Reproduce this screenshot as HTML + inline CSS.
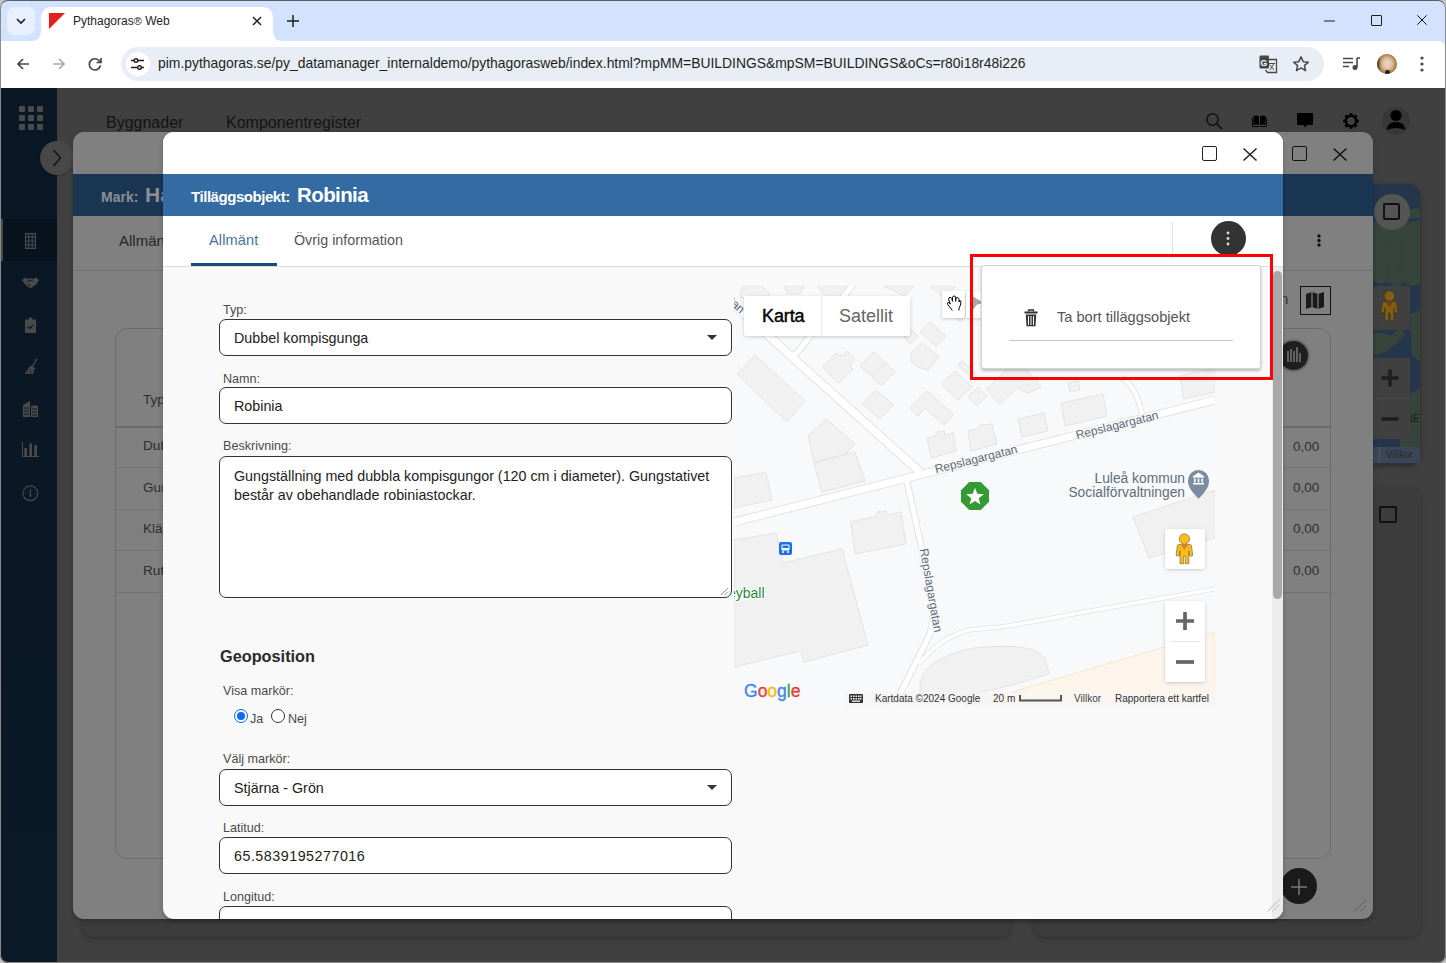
<!DOCTYPE html>
<html><head><meta charset="utf-8">
<style>
*{box-sizing:border-box;margin:0;padding:0}
html,body{width:1446px;height:963px;overflow:hidden;background:#404040;font-family:"Liberation Sans",sans-serif}
.a{position:absolute}
.t{position:absolute;white-space:nowrap;line-height:1}
svg{position:absolute;overflow:visible}
.lbl{font-size:12.6px;color:#4a4a4a}
.val{font-size:14.3px;color:#222}
.fld{position:absolute;left:56px;width:513px;border:1.3px solid #333;border-radius:7px;background:#fff}
</style></head><body>
<!-- ============ BROWSER CHROME ============ -->
<div class="a" style="left:0;top:0;width:1446px;height:88px;background:#d3e3fd"></div>
<div class="a" style="left:0;top:41px;width:1446px;height:47px;background:#fff"></div>
<!-- window frame -->
<div class="a" style="left:0;top:0;width:1446px;height:963px;border-radius:8px;border:1px solid #8a8a8a;border-top:1.6px solid #5a5f66;box-shadow:0 0 0 12px #c4c4c4;z-index:100;pointer-events:none"></div>
<div class="a" style="left:1436px;top:41px;width:10px;height:10px;background:#d3e3fd"></div><div class="a" style="left:1436px;top:41px;width:10px;height:10px;background:#fff;border-radius:0 8px 0 0"></div>
<!-- tab dropdown -->
<div class="a" style="left:7px;top:7px;width:28px;height:28px;border-radius:8px;background:#e9f0fd"></div>
<svg style="left:15px;top:15px" width="12" height="12" viewBox="0 0 12 12"><path d="M2 4 L6 8 L10 4" fill="none" stroke="#1f1f1f" stroke-width="1.6"/></svg>
<!-- active tab -->
<div class="a" style="left:41px;top:7px;width:232px;height:34px;background:#fff;border-radius:10px 10px 0 0"></div>
<svg style="left:31px;top:31px" width="10" height="10"><path d="M0 10 Q10 10 10 0 L10 10 Z" fill="#fff"/></svg>
<svg style="left:273px;top:31px" width="10" height="10"><path d="M10 10 Q0 10 0 0 L0 10 Z" fill="#fff"/></svg>
<svg style="left:49px;top:13px" width="16" height="16"><path d="M0 0 L16 0 L0 16 Z" fill="#e3201b"/></svg>
<div class="t" style="left:73px;top:15px;font-size:12px;color:#1f1f1f">Pythagoras<span style="font-size:11px">®</span> Web</div>
<svg style="left:252px;top:16px" width="10" height="10"><path d="M1 1 L9 9 M9 1 L1 9" stroke="#1f1f1f" stroke-width="1.5"/></svg>
<svg style="left:287px;top:15px" width="12" height="12"><path d="M6 0 V12 M0 6 H12" stroke="#1f1f1f" stroke-width="1.5"/></svg>
<!-- window controls -->
<svg style="left:1324px;top:20px" width="12" height="2"><path d="M0 1 H11" stroke="#1f1f1f" stroke-width="1"/></svg>
<div class="a" style="left:1371px;top:15px;width:11px;height:11px;border:1px solid #1f1f1f;border-radius:1px"></div>
<svg style="left:1417px;top:15px" width="10" height="10"><path d="M0.3 0.3 L9.7 9.7 M9.7 0.3 L0.3 9.7" stroke="#111" stroke-width="1"/></svg>
<!-- nav buttons -->
<svg style="left:16px;top:57px" width="14" height="14"><path d="M13 7 H2 M7 2 L2 7 L7 12" fill="none" stroke="#474747" stroke-width="1.7"/></svg>
<svg style="left:52px;top:57px" width="14" height="14"><path d="M1 7 H12 M7 2 L12 7 L7 12" fill="none" stroke="#a8a8a8" stroke-width="1.7"/></svg>
<svg style="left:88px;top:57px" width="14" height="14"><path d="M12.2 5.5 A5.6 5.6 0 1 0 12.4 8.5" fill="none" stroke="#474747" stroke-width="1.7"/><path d="M8.5 5.5 H13 V1" fill="none" stroke="#474747" stroke-width="1.7"/></svg>
<!-- omnibox -->
<div class="a" style="left:121px;top:47px;width:1203px;height:34px;border-radius:17px;background:#e9eef6"></div>
<div class="a" style="left:126px;top:52px;width:24px;height:24px;border-radius:12px;background:#fff"></div>
<svg style="left:131px;top:58px" width="14" height="12"><path d="M0 2.5 H3 M7 2.5 H13 M0 9.5 H6 M10 9.5 H13" stroke="#1f1f1f" stroke-width="1.6"/><circle cx="5" cy="2.5" r="1.8" fill="none" stroke="#1f1f1f" stroke-width="1.4"/><circle cx="8.5" cy="9.5" r="1.8" fill="none" stroke="#1f1f1f" stroke-width="1.4"/></svg>
<div class="t" style="left:158px;top:57px;font-size:13.9px;color:#1f1f1f">pim.pythagoras.se/py_datamanager_internaldemo/pythagorasweb/index.html?mpMM=BUILDINGS&amp;mpSM=BUILDINGS&amp;oCs=r80i18r48i226</div>
<!-- translate icon -->
<svg style="left:1259px;top:55px" width="19" height="19" viewBox="0 0 19 19"><path d="M6.5 4.5 H17.5 V17.5 H8.5 L6.5 15" fill="#eaeef6" stroke="#474747" stroke-width="1.3"/><rect x="0.5" y="0.5" width="9.5" height="13" rx="1" fill="#474747"/><text x="1.6" y="10.5" font-size="8.5" font-family="Liberation Sans" font-weight="bold" fill="#fff">G</text><path d="M10.5 9.5 L15 15 M15 8.5 L11 15 M10 8.5 H16" stroke="#474747" stroke-width="1"/></svg>
<!-- star -->
<svg style="left:1292px;top:55px" width="18" height="18" viewBox="0 0 24 24"><path d="M12 2.5 L14.9 8.9 L21.8 9.5 L16.5 14.1 L18.1 20.9 L12 17.3 L5.9 20.9 L7.5 14.1 L2.2 9.5 L9.1 8.9 Z" fill="none" stroke="#474747" stroke-width="2" stroke-linejoin="round"/></svg>
<!-- media icon -->
<svg style="left:1343px;top:57px" width="17" height="14"><path d="M0 1.5 H10 M0 5.5 H10 M0 9.5 H6" stroke="#474747" stroke-width="1.7"/><path d="M14 1 V10" stroke="#474747" stroke-width="1.6"/><path d="M14 1 H17" stroke="#474747" stroke-width="1.6"/><circle cx="12" cy="10.5" r="2.5" fill="#474747"/></svg>
<!-- avatar -->
<div class="a" style="left:1377px;top:54px;width:20px;height:20px;border-radius:10px;overflow:hidden;background:radial-gradient(ellipse 40% 45% at 52% 48%,#f0d8c8 0,#e0c0a8 55%,rgba(200,160,110,0) 100%),radial-gradient(circle at 50% 50%,#c8a878 0,#b08850 60%,#6a5030 85%,#302010 100%)">
<div class="a" style="left:7.5px;top:16px;width:5px;height:4px;border-radius:2px 2px 0 0;background:#2a2420"></div><div class="a" style="left:0;top:0;width:4px;height:20px;background:linear-gradient(90deg,rgba(20,15,10,.7),rgba(20,15,10,0))"></div>
</div>
<!-- menu dots -->
<svg style="left:1420px;top:56px" width="4" height="16"><circle cx="2" cy="2" r="1.6" fill="#474747"/><circle cx="2" cy="8" r="1.6" fill="#474747"/><circle cx="2" cy="14" r="1.6" fill="#474747"/></svg>

<!-- ============ PAGE ============ -->
<div class="a" style="left:1px;top:88px;width:1444px;height:874px;background:#404040"></div>
<!-- sidebar -->
<div class="a" style="left:1px;top:88px;width:56px;height:874px;background:linear-gradient(180deg,#0a1724 0%,#0b1a28 100%)"></div>
<div class="a" style="left:1px;top:219px;width:56px;height:42px;background:#08131d"></div>
<div class="a" style="left:1px;top:219px;width:2px;height:42px;background:#4a4a4a"></div>
<!-- grid icon -->
<svg style="left:19px;top:106px" width="24" height="24"><g fill="#4a4a4a"><rect x="0" y="0" width="6" height="6" rx="1"/><rect x="9" y="0" width="6" height="6" rx="1"/><rect x="18" y="0" width="6" height="6" rx="1"/><rect x="0" y="9" width="6" height="6" rx="1"/><rect x="9" y="9" width="6" height="6" rx="1"/><rect x="18" y="9" width="6" height="6" rx="1"/><rect x="0" y="18" width="6" height="6" rx="1"/><rect x="9" y="18" width="6" height="6" rx="1"/><rect x="18" y="18" width="6" height="6" rx="1"/></g></svg>
<!-- sidebar icons -->
<svg style="left:25px;top:233px" width="11" height="16"><rect x="0.6" y="0.6" width="9.8" height="14.8" fill="none" stroke="#4a4a4a" stroke-width="1.2"/><path d="M3.8 0 V16 M7.2 0 V16 M0 4 H11 M0 8 H11 M0 12 H11" stroke="#4a4a4a" stroke-width="1.1"/></svg>
<svg style="left:22px;top:277px" width="17" height="11"><path d="M0 3 L3 0.5 L6 2 L8.5 1 L11 2 L14 0.5 L17 3 L14.5 7 L10 10.5 L8 11 L5 9 L2.5 6.5 Z" fill="#4a4a4a"/><path d="M5 5 L8 3 L11 4.5 M6 7 L9 8.5" fill="none" stroke="#0a1520" stroke-width="0.9"/></svg>
<svg style="left:25px;top:317px" width="11" height="16"><rect x="0" y="2.5" width="11" height="13.5" rx="0.5" fill="#4a4a4a"/><circle cx="5.5" cy="2" r="1.8" fill="#4a4a4a"/><path d="M2.8 9.5 L4.8 11.5 L8.3 7.8" fill="none" stroke="#0a1520" stroke-width="1.2"/></svg>
<svg style="left:24px;top:358px" width="14" height="17"><path d="M13 0.5 L8.5 8.5" stroke="#4a4a4a" stroke-width="1.3"/><path d="M6.5 7.5 L11 10 L9 16 L0.5 16 Z" fill="#4a4a4a"/><path d="M3 16 L7 10.5 M6 16 L9 11" stroke="#0a1520" stroke-width="0.6"/></svg>
<svg style="left:23px;top:401px" width="15" height="16"><path d="M0 4 L7 0 V16 H0 Z" fill="#4a4a4a"/><path d="M8 5 Q11.5 3.5 15 5 V16 H8 Z" fill="#4a4a4a"/><path d="M1 7 H6 M1 10 H6 M1 13 H6 M9 8 H14 M9 11 H14 M9 14 H14" stroke="#0a1520" stroke-width="0.9"/></svg>
<svg style="left:22px;top:442px" width="17" height="15"><path d="M0.5 0 V14.5 H17" fill="none" stroke="#4a4a4a" stroke-width="1"/><rect x="2.3" y="6" width="2.7" height="8" fill="#4a4a4a"/><rect x="7.3" y="1.5" width="2.7" height="12.5" fill="#4a4a4a"/><rect x="12.3" y="3" width="2.7" height="11" fill="#4a4a4a"/></svg>
<svg style="left:22px;top:485px" width="17" height="17"><circle cx="8.3" cy="8.3" r="7.4" fill="none" stroke="#4a4a4a" stroke-width="1.2"/><path d="M8.3 4.5 V10" stroke="#4a4a4a" stroke-width="1.2"/><path d="M6.8 11.5 L8.3 8.5 L9.8 11.5 Z" fill="#4a4a4a"/><path d="M3 8.3 H4.3 M12.3 8.3 H13.6 M8.3 2.2 V3.4 M4.5 4.5 L5.3 5.3 M12.1 4.5 L11.3 5.3" stroke="#4a4a4a" stroke-width="0.8"/></svg>

<!-- top nav -->
<div class="t" style="left:106px;top:115px;font-size:16px;color:#141414">Byggnader</div>
<div class="t" style="left:226px;top:115px;font-size:16px;color:#141414">Komponentregister</div>
<!-- right top icons -->
<svg style="left:1206px;top:113px" width="17" height="16"><circle cx="6.5" cy="6.5" r="5.7" fill="none" stroke="#111" stroke-width="1.5"/><path d="M10.5 10.5 L16 16" stroke="#111" stroke-width="1.7"/></svg>
<svg style="left:1252px;top:115px" width="15" height="12"><path d="M1.5 1 Q4.5 0 7 1.2 V10 Q4.5 9 1.5 10 Z M8 1.2 Q10.5 0 13.5 1 V10 Q10.5 9 8 10 Z" fill="#000"/><path d="M0.5 2.5 V11.5 H6.5 Q7.5 10.8 8.5 11.5 H14.5 V2.5" fill="none" stroke="#000" stroke-width="0.9"/></svg>
<svg style="left:1297px;top:113px" width="16" height="15"><path d="M0 1 Q0 0 1 0 H15 Q16 0 16 1 V11 Q16 12 15 12 H10 L8 14.5 L6.5 12 H1 Q0 12 0 11 Z" fill="#000"/></svg>
<svg style="left:1342.5px;top:112.8px" width="16" height="16"><g fill="#000"><rect x="6.4" y="0.20000000000000018" width="3.2" height="3.6" rx="0.7" transform="rotate(0 8 8)"/><rect x="6.4" y="0.20000000000000018" width="3.2" height="3.6" rx="0.7" transform="rotate(45 8 8)"/><rect x="6.4" y="0.20000000000000018" width="3.2" height="3.6" rx="0.7" transform="rotate(90 8 8)"/><rect x="6.4" y="0.20000000000000018" width="3.2" height="3.6" rx="0.7" transform="rotate(135 8 8)"/><rect x="6.4" y="0.20000000000000018" width="3.2" height="3.6" rx="0.7" transform="rotate(180 8 8)"/><rect x="6.4" y="0.20000000000000018" width="3.2" height="3.6" rx="0.7" transform="rotate(225 8 8)"/><rect x="6.4" y="0.20000000000000018" width="3.2" height="3.6" rx="0.7" transform="rotate(270 8 8)"/><rect x="6.4" y="0.20000000000000018" width="3.2" height="3.6" rx="0.7" transform="rotate(315 8 8)"/></g><circle cx="8" cy="8" r="5.1" fill="none" stroke="#000" stroke-width="2.4"/></svg>
<div class="a" style="left:1382px;top:107px;width:28px;height:28px;border-radius:14px;background:#373737"></div>
<svg style="left:1386px;top:109px" width="20" height="22"><circle cx="10" cy="6.5" r="5.5" fill="#000"/><path d="M1 21 Q1 13 10 13 Q19 13 19 21 Q10 17 1 21 Z" fill="#000"/></svg>
<!-- chevron circle -->
<div class="a" style="left:40px;top:141px;width:34px;height:34px;border-radius:17px;background:#484848;box-shadow:0 1px 2px rgba(0,0,0,.25)"></div>
<svg style="left:52px;top:149px" width="10" height="18"><path d="M1.5 1 L8.5 9 L1.5 17" fill="none" stroke="#111" stroke-width="1.3"/></svg>

<!-- bottom background cards -->
<div class="a" style="left:82px;top:700px;width:930px;height:237px;border-radius:12px;background:#3c3c3c;box-shadow:0 2px 4px rgba(0,0,0,.25)"></div>
<div class="a" style="left:1033px;top:486px;width:388px;height:451px;border-radius:12px;background:#3c3c3c;box-shadow:0 2px 4px rgba(0,0,0,.25)"></div>
<div class="a" style="left:1379px;top:506px;width:18px;height:17px;border:2px solid #111;border-radius:2px"></div>
<!-- right map card -->
<div class="a" style="left:1300px;top:184px;width:120px;height:280px;border-radius:12px;background:#24354c;overflow:hidden;box-shadow:0 2px 5px rgba(0,0,0,.35)">
  <svg style="left:0;top:0" width="120" height="280"><g fill="#36443b"><path d="M72 38 Q90 34 100 40 L120 36 L120 100 Q110 104 104 98 L96 104 Q88 96 80 100 L72 96 Z"/><path d="M110 26 Q116 22 120 26 L120 34 L108 34 Z"/><path d="M72 150 Q80 146 90 152 L100 144 L106 150 L96 160 L86 168 L72 172 Z"/><path d="M110 130 L120 126 L120 178 L112 170 Z"/><path d="M110 210 L120 204 L120 270 L112 262 Q106 240 110 210 Z"/><path d="M100 250 L112 240 L118 270 L100 272 Z"/></g><path d="M85 60 Q92 80 88 100 M100 50 Q104 70 98 94" stroke="#33433a" stroke-width="1" fill="none"/></svg>
  <div class="t" style="left:110px;top:230px;font-size:10px;font-style:italic;color:#1a1a1a">IEN</div>
</div>
<div class="a" style="left:1374px;top:194px;width:36px;height:36px;border-radius:18px;background:#555"></div>
<div class="a" style="left:1383px;top:203px;width:17px;height:17px;border:2px solid #111;border-radius:2px"></div>
<div class="a" style="left:1372px;top:286px;width:38px;height:44px;background:#404040"></div>
<svg style="left:1374.6px;top:287px" width="30" height="38" viewBox="0 0 30 38"><circle cx="14.4" cy="9" r="5.2" fill="#7e5f14" stroke="#3a3020" stroke-width="0.6"/><path d="M8.7 14.5 L20.1 14.5 Q21.2 14.6 21.5 15.8 L22.7 25 Q22.7 26 21.6 26 L20.2 26 Q19.4 26 19.2 25 L18.8 21 L18.8 33.7 L15.2 33.7 L15.2 26 L13.6 26 L13.6 33.7 L10 33.7 L10 21 L9.6 25 Q9.4 26 8.6 26 L7.2 26 Q6.1 26 6.1 25 L7.3 15.8 Q7.6 14.6 8.7 14.5 Z" fill="#7e5f14" stroke="#3a3020" stroke-width="0.6"/><path d="M10.5 14.6 L18.3 14.6 L14.4 20.2 Z" fill="#71411a"/></svg>
<div class="a" style="left:1372px;top:358px;width:38px;height:81px;background:#404040"></div>
<div class="a" style="left:1374px;top:398px;width:34px;height:1px;background:#4a4a4a"></div>
<svg style="left:1381px;top:369px" width="18" height="18"><path d="M9 0.5 V17.5 M0.5 9 H17.5" stroke="#1e1e1e" stroke-width="3.5"/></svg>
<svg style="left:1381px;top:410px" width="18" height="18"><path d="M0.5 9 H17.5" stroke="#1e1e1e" stroke-width="3.5"/></svg>
<div class="a" style="left:1372px;top:447px;width:48px;height:16px;background:#3c4656"></div>
<div class="t" style="left:1386px;top:450px;font-size:10px;color:#2a2a2a">Villkor</div>
<div class="a" style="left:1379px;top:447px;width:1px;height:16px;background:#555"></div>


<!-- ============ MODAL 1 (dimmed) ============ -->
<div class="a" style="left:73px;top:132px;width:1300px;height:787px;border-radius:11px;background:#808080;overflow:hidden;box-shadow:0 2px 4px rgba(0,0,0,.25)">
  <div class="a" style="left:0;top:42px;width:1300px;height:42px;background:#1a3652"></div>
  <div class="t" style="left:28px;top:58px;font-size:14px;font-weight:bold;color:#8a8f96">Mark:</div>
  <div class="t" style="left:72px;top:52px;font-size:21px;font-weight:bold;color:#8c9096">Ha</div>
  <div class="a" style="left:1219px;top:14px;width:15px;height:15px;border:1.6px solid #111;border-radius:2px"></div>
  <svg style="left:1260px;top:16px" width="14" height="13"><path d="M0.5 0.5 L13.5 12.5 M13.5 0.5 L0.5 12.5" stroke="#111" stroke-width="1.5"/></svg>
  <div class="t" style="left:46px;top:101px;font-size:15px;color:#262626">Allmänt</div>
  <div class="a" style="left:0;top:138px;width:1300px;height:1px;background:#707070"></div>
  <svg style="left:1244px;top:102px" width="4" height="13"><circle cx="2" cy="2" r="1.7" fill="#111"/><circle cx="2" cy="6.5" r="1.7" fill="#111"/><circle cx="2" cy="11" r="1.7" fill="#111"/></svg>
  <div class="t" style="left:1207px;top:159px;font-size:15px;color:#333">n</div>
  <div class="a" style="left:1227px;top:154px;width:31px;height:29px;border:1px solid #111"></div>
  <svg style="left:1233px;top:160px" width="19" height="17"><path d="M0 2 L6 0 L12 2 L18 0 V15 L12 17 L6 15 L0 17 Z" fill="#1a1a1a"/><path d="M6 0 V15 M12 2 V17" stroke="#808080" stroke-width="1.2"/></svg>
  <!-- inner card -->
  <div class="a" style="left:42px;top:196px;width:1216px;height:531px;border:1px solid #6c6c6c;border-radius:12px"></div>
  <div class="a" style="left:1206px;top:209px;width:29px;height:29px;border-radius:15px;background:#1f1f1f;box-shadow:0 0 0 2px #6a6a6a"></div>
  <svg style="left:1213px;top:215px" width="15" height="17"><path d="M2 4 V15 M5 2 V15 M8 4 V15 M11 0 V15 M14 6 V15" stroke="#888" stroke-width="1.3"/></svg>
  <div class="t" style="left:70px;top:261px;font-size:13.6px;color:#2e2e2e">Typ</div>
  <div class="a" style="left:43px;top:294px;width:1215px;height:2px;background:#6a6a6a"></div>
  <div class="a" style="left:43px;top:335px;width:1215px;height:1px;background:#737373"></div>
  <div class="a" style="left:43px;top:377px;width:1215px;height:1px;background:#737373"></div>
  <div class="a" style="left:43px;top:418px;width:1215px;height:1px;background:#737373"></div>
  <div class="a" style="left:43px;top:460px;width:1215px;height:1px;background:#737373"></div>
  <div class="t" style="left:70px;top:307px;font-size:13.6px;color:#2e2e2e">Dubbel</div>
  <div class="t" style="left:70px;top:349px;font-size:13.6px;color:#2e2e2e">Gunga</div>
  <div class="t" style="left:70px;top:390px;font-size:13.6px;color:#2e2e2e">Klätter</div>
  <div class="t" style="left:70px;top:432px;font-size:13.6px;color:#2e2e2e">Rutsch</div>
  <div class="t" style="left:1220px;top:308px;font-size:13.5px;color:#303030">0,00</div>
  <div class="t" style="left:1220px;top:349px;font-size:13.5px;color:#303030">0,00</div>
  <div class="t" style="left:1220px;top:390px;font-size:13.5px;color:#303030">0,00</div>
  <div class="t" style="left:1220px;top:432px;font-size:13.5px;color:#303030">0,00</div>
  <!-- fab -->
  <div class="a" style="left:1208px;top:736px;width:36px;height:36px;border-radius:18px;background:#1a1a1a"></div>
  <svg style="left:1216px;top:745px" width="20" height="20"><path d="M10 2 V18 M2 10 H18" stroke="#7a7a7a" stroke-width="1.5"/></svg>
  <svg style="left:1280px;top:766px" width="14" height="14"><path d="M2 13 L13 2 M8 13 L13 8" stroke="#6c6c6c" stroke-width="1.4" stroke-linecap="round"/></svg>
</div>


<!-- ============ MODAL 2 (active) ============ -->
<div class="a" style="left:163px;top:132px;width:1120px;height:787px;border-radius:11px;background:#f9f9f9;overflow:hidden;box-shadow:0 2px 4px rgba(0,0,0,.25)">
  <div class="a" style="left:0;top:0;width:1120px;height:134px;background:#fff"></div>
  <div class="a" style="left:1039px;top:14px;width:15px;height:15px;border:1.6px solid #222;border-radius:2px"></div>
  <svg style="left:1080px;top:16px" width="14" height="13"><path d="M0.5 0.5 L13.5 12.5 M13.5 0.5 L0.5 12.5" stroke="#222" stroke-width="1.5"/></svg>
  <div class="a" style="left:0;top:42px;width:1120px;height:42px;background:#336ba2"></div>
  <div class="t" style="left:28px;top:57px;font-size:15px;font-weight:bold;letter-spacing:-0.45px;color:#fff">Tilläggsobjekt:</div>
  <div class="t" style="left:134px;top:53px;font-size:20.5px;font-weight:bold;letter-spacing:-0.6px;color:#fff">Robinia</div>
  <!-- tabs -->
  <div class="t" style="left:46px;top:101px;font-size:14.6px;color:#4a72a0;letter-spacing:0.1px">Allmänt</div>
  <div class="t" style="left:131px;top:101px;font-size:14.3px;color:#555">Övrig information</div>
  <div class="a" style="left:28px;top:131px;width:86px;height:3px;background:#1d4a7c"></div>
  <div class="a" style="left:0;top:134px;width:1120px;height:1px;background:#dcdcdc"></div>
  <div class="a" style="left:1009px;top:90px;width:1px;height:37px;background:#e4e4e4"></div>
  <div class="a" style="left:1048px;top:88.5px;width:35px;height:35px;border-radius:17.5px;background:#333"></div>
  <svg style="left:1062.5px;top:98.5px" width="4" height="14"><circle cx="2" cy="2" r="1.4" fill="#ddd"/><circle cx="2" cy="7.5" r="1.4" fill="#ddd"/><circle cx="2" cy="13" r="1.4" fill="#ddd"/></svg>
  <!-- scrollbar -->
  <div class="a" style="left:1109px;top:135px;width:11px;height:652px;background:#ececec"></div>
  <div class="a" style="left:1110px;top:139px;width:9px;height:328px;border-radius:5px;background:#a8a8a8"></div>
  <svg style="left:1104px;top:766px" width="14" height="14"><path d="M1 13 L12 2 M6 13 L12 7" stroke="#d0d0d0" stroke-width="1.4" stroke-linecap="round"/></svg>
  <!-- form -->
  
  <div class="t lbl" style="left:60px;top:172px">Typ:</div>
  <div class="fld" style="top:187px;height:37px"></div>
  <div class="t val" style="left:71px;top:199px">Dubbel kompisgunga</div>
  <svg style="left:544px;top:203px" width="10" height="5"><path d="M0 0 H10 L5 5 Z" fill="#333"/></svg>
  <div class="t lbl" style="left:60px;top:241px">Namn:</div>
  <div class="fld" style="top:255px;height:37px"></div>
  <div class="t val" style="left:71px;top:267px">Robinia</div>
  <div class="t lbl" style="left:60px;top:308px">Beskrivning:</div>
  <div class="fld" style="top:324px;height:142px"></div>
  <div class="t val" style="left:71px;top:335px;line-height:19px;white-space:normal;width:490px">Gungställning med dubbla kompisgungor (120 cm i diameter). Gungstativet består av obehandlade robiniastockar.</div>
  <svg style="left:557px;top:455px" width="9" height="9"><path d="M1 8 L8 1 M4.5 8 L8 4.5" stroke="#888" stroke-width="0.9"/></svg>
  <div class="t" style="left:57px;top:516px;font-size:16.3px;font-weight:bold;color:#2a2a2a">Geoposition</div>
  <div class="t lbl" style="left:60px;top:553px">Visa markör:</div>
  <div class="a" style="left:71px;top:577px;width:14px;height:14px;border-radius:7px;border:1.3px solid #0b6bf7;background:#fff"></div>
  <div class="a" style="left:73.7px;top:579.7px;width:8.6px;height:8.6px;border-radius:4.3px;background:#0b6bf7"></div>
  <div class="t lbl" style="left:87px;top:581px">Ja</div>
  <div class="a" style="left:108px;top:577px;width:14px;height:14px;border-radius:7px;border:1px solid #333;background:#fff"></div>
  <div class="t lbl" style="left:125px;top:581px">Nej</div>
  <div class="t lbl" style="left:60px;top:621px">Välj markör:</div>
  <div class="fld" style="top:637px;height:37px"></div>
  <div class="t val" style="left:71px;top:649px">Stjärna - Grön</div>
  <svg style="left:544px;top:653px" width="10" height="5"><path d="M0 0 H10 L5 5 Z" fill="#333"/></svg>
  <div class="t lbl" style="left:60px;top:690px">Latitud:</div>
  <div class="fld" style="top:705px;height:37px"></div>
  <div class="t val" style="left:71px;top:716.5px;letter-spacing:0.5px">65.5839195277016</div>
  <div class="t lbl" style="left:60px;top:758.5px">Longitud:</div>
  <div class="fld" style="top:774px;height:37px"></div>

</div>


<!-- ============ MAP ============ -->
<div class="a" style="left:734px;top:286px;width:481px;height:420px;border-radius:12px 0 0 12px;overflow:hidden;background:#f8f9fa">
<svg style="left:0;top:0" width="481" height="420" viewBox="0 0 481 420">
  <!-- peach area -->
  <path d="M230 420 L481 346 L481 420 Z" fill="#fdf5ec" stroke="#fbe3c8" stroke-width="1"/>
  <g fill="#f1f1f1" stroke="#e3e3e3" stroke-width="1">
    <!-- top row partial -->
    <path d="M8 0 L28 0 L36 8 L26 16 L6 12 Z"/>
    <path d="M50 0 L70 0 L66 8 L54 8 Z"/>
    <path d="M84 0 L120 0 L110 12 L92 12 Z"/>
    <path d="M150 0 L180 0 L170 10 Z"/>
    <path d="M196 0 L222 0 L210 12 Z"/>
    <path d="M224 10 L238 24 L226 36 L214 24 Z"/>
    <path d="M270 0 L290 0 L282 8 Z"/>
    <!-- left big -->
    <path d="M3 88 L21 69 L71 115 L53 136 Z"/>
    <!-- cross -->
    <path d="M88 81 L102 67 L108 70 L113 65 L121 73 L116 80 L119 84 L104 97 Z"/>
    <!-- double -->
    <path d="M126 80 L140 66 L152 77 L138 91 Z"/>
    <path d="M138 91 L152 77 L161 86 L147 100 Z"/>
    <!-- notched -->
    <path d="M177 67 L188 57 L205 71 L194 84 L184 81 L177 75 Z"/>
    <path d="M186 46 L196 36 L212 50 L202 60 Z"/>
    <path d="M170 50 L178 44 L184 50 L176 58 Z"/>
    <path d="M160 16 L172 28 L168 34 L156 22 Z"/>
    <path d="M128 118 L142 104 L160 119 L146 133 Z"/>
    <!-- L -->
    <path d="M176 122 L193 105 L220 129 L210 139 L191 122 L184 130 Z"/>
    <path d="M207 98 L221 85 L238 101 L224 114 Z"/>
    <path d="M234 111 L244 101 L253 110 L243 120 Z"/>
    <path d="M252.3 103.8 L265.6 118.2 L283.3 101.7 L289 105 L294.4 107.2 L307.6 100.6 L298.7 91.7 L290 80 L276 80 Z"/><path d="M223.5 79 L228 75 L241 86 L236.5 90.5 Z"/>
    <!-- pentagon + rect -->
    <path d="M74 150 L92 133 L121 158 L112 168 L80 176 Z"/>
    <path d="M80 177 L121 166 L131 195 L88 206 Z"/>
    <path d="M193 152 L202 150 L202 146 L210 145 L211 149 L219 147 L222 165 L197 172 Z"/>
    <path d="M234 145 L245 142 L246 139 L258 138 L263 158 L237 165 Z"/>
    <path d="M284 133 L310 127 L314 145 L288 151 Z"/>
    <path d="M327 117 L369 108 L373 130 L331 140 Z"/>
    <path d="M334 97 L344 95 L346 104 L336 106 Z"/>
    <path d="M446 90 L481 82 L481 106 L450 113 Z"/>
    
    <!-- left -->
    <path d="M0 192 L32 186 L38 214 L0 222 Z"/>
    <path d="M117 236 L143 230 L143 226 L152 225 L153 229 L167 226 L172 258 L121 268 Z"/>
    <!-- big bottom-left -->
    <path d="M0 254 L42 247 L49 277 L108 263 L134 359 L70 376 L67 365 L0 381 Z"/>
    <!-- right -->
    <path d="M399 231 L481 204 L481 252 L415 272 Z"/>
    <!-- bottom curved -->
    <path d="M186 398 Q190 372 240 362 Q300 356 311 372 L315 388 Q250 410 186 415 Z"/>
  </g>
  <!-- roads -->
  <g fill="none" stroke-linecap="butt">
    <path d="M-21 0 L186 186" stroke="#e2e3e5" stroke-width="9.5"/>
    <path d="M120 -2 L60 70" stroke="#e2e3e5" stroke-width="7"/>
    <path d="M0 236 L481 114" stroke="#e2e3e5" stroke-width="9"/>
    <path d="M172 192 L194 290 L200 328 L196 348 L160 420" stroke="#e2e3e5" stroke-width="7"/>
    <path d="M185 378 Q205 352 235 344 L266 341 Q300 336 350 326 L481 303" stroke="#e2e3e5" stroke-width="5"/>
    <path d="M388 92 Q402 100 408 128" stroke="#e2e3e5" stroke-width="6"/>
    <path d="M-21 0 L186 186" stroke="#fff" stroke-width="7.5"/>
    <path d="M120 -2 L60 70" stroke="#fff" stroke-width="5"/>
    <path d="M0 236 L481 114" stroke="#fff" stroke-width="7"/>
    <path d="M172 192 L194 290 L200 328 L196 348 L160 420" stroke="#fff" stroke-width="5"/>
    <path d="M185 378 Q205 352 235 344 L266 341 Q300 336 350 326 L481 303" stroke="#fff" stroke-width="3.5"/>
    <path d="M388 92 Q402 100 408 128" stroke="#fff" stroke-width="4"/>
  </g>
  <!-- labels -->
  <g font-family="Liberation Sans" font-size="12" fill="#5f6b78" stroke="#f8f9fa" stroke-width="2.5" paint-order="stroke">
    <text x="243" y="177" transform="rotate(-14 243 177)" text-anchor="middle">Repslagargatan</text>
    <text x="384" y="143" transform="rotate(-14 384 143)" text-anchor="middle">Repslagargatan</text>
    <text x="193" y="305" transform="rotate(80 193 305)" text-anchor="middle">Repslagargatan</text>
    <text x="9" y="25" transform="rotate(42 9 25)" text-anchor="end" dy="4">Repslagargatan</text>
  </g>
  <g font-family="Liberation Sans" font-size="13.8" fill="#5f6e7c" stroke="#f8f9fa" stroke-width="2" paint-order="stroke" text-anchor="end">
    <text x="451" y="197">Luleå kommun</text>
    <text x="451" y="211">Socialförvaltningen</text>
  </g>
  <!-- pin -->
  <path d="M464.6 212.8 C456 204 454 200 454 194.5 A10.5 10.5 0 0 1 475 194.5 C475 200 473 204 464.6 212.8 Z" fill="#7b8d9e"/>
  <g fill="#fff"><rect x="459" y="190" width="11" height="1.6"/><path d="M459.5 190 L464.5 186.5 L469.5 190 Z"/><rect x="460" y="192.5" width="1.6" height="4"/><rect x="463.7" y="192.5" width="1.6" height="4"/><rect x="467.4" y="192.5" width="1.6" height="4"/><rect x="459" y="197" width="11" height="1.5"/></g>
  <!-- star marker -->
  <path d="M235.2 196 L246.8 196 L255 204.2 L255 215.8 L246.8 224 L235.2 224 L227 215.8 L227 204.2 Z" fill="#349a36" stroke="#fff" stroke-width="1.6" paint-order="stroke"/>
  <path d="M241.00 201.70 L243.29 207.84 L249.84 208.13 L244.71 212.21 L246.47 218.52 L241.00 214.90 L235.53 218.52 L237.29 212.21 L232.16 208.13 L238.71 207.84 Z" fill="#fff"/>
  <!-- bus -->
  <rect x="45" y="256" width="13" height="13" rx="2" fill="#1a73e8"/>
  <rect x="47.5" y="258.5" width="8" height="6" rx="1" fill="#fff"/>
  <rect x="48.5" y="259.5" width="6" height="2.5" fill="#1a73e8"/>
  <circle cx="49" cy="266" r="1" fill="#fff"/><circle cx="54" cy="266" r="1" fill="#fff"/>
  <!-- volleyball -->
  <text x="30.5" y="312" text-anchor="end" font-family="Liberation Sans" font-size="14" fill="#1e8a3c" stroke="#fff" stroke-width="2.5" paint-order="stroke">Volleyball</text>
</svg>
  <!-- Karta/Satellit -->
  <div class="a" style="left:10px;top:10px;width:166px;height:40px;background:#fff;border-radius:2px;box-shadow:0 1px 4px -1px rgba(0,0,0,.3)"></div>
  <div class="a" style="left:87px;top:10px;width:1px;height:40px;background:#ebebeb"></div>
  <div class="t" style="left:28px;top:21px;font-size:18px;letter-spacing:-0.1px;color:#000;-webkit-text-stroke:0.4px #000">Karta</div>
  <div class="t" style="left:105px;top:21px;font-size:18px;color:#666">Satellit</div>
  <!-- hand button -->
  <div class="a" style="left:208px;top:5px;width:23px;height:27px;background:#fff;box-shadow:0 1px 3px rgba(0,0,0,.2)"></div>
  <svg style="left:212px;top:9px" width="17" height="17" viewBox="0 0 17 17"><path d="M6.4 15.5 L1.5 9.2 Q1.2 7.3 2.8 7.3 L4.3 9.2 L2.6 4.2 Q2.6 2.4 4 2.4 Q5.4 2.4 5.8 3.6 L6.5 6.3 L6.5 2.2 Q6.8 1 8.1 1 Q9.5 1 9.6 2.2 L9.6 6.3 L10 3 Q10.6 2.3 11.8 2.6 Q12.8 3 13 4.2 L13 7 L13.6 5.6 Q14.9 5.2 14.9 7.2 L14.6 10 L13.3 12.3 L12.8 15.5" fill="#fff" stroke="#000" stroke-width="1" stroke-linejoin="round"/></svg>
  <div class="a" style="left:232px;top:5px;width:20px;height:27px;background:#fff;box-shadow:0 1px 3px rgba(0,0,0,.2)"></div>
  <svg style="left:238px;top:10px" width="12" height="14"><path d="M1 1 L11 7 L5 8 L1 13 Z" fill="#aaa" stroke="#888" stroke-width="0.6"/></svg>
  <!-- pegman -->
  <div class="a" style="left:431px;top:243px;width:40px;height:40px;background:#fff;border-radius:2px;box-shadow:0 1px 4px -1px rgba(0,0,0,.3)"></div>
  <svg style="left:436px;top:244px" width="30" height="38" viewBox="0 0 30 38"><circle cx="14.4" cy="9" r="5.2" fill="#fdbd1d" stroke="#6b5a3a" stroke-width="0.6"/><path d="M8.7 14.5 L20.1 14.5 Q21.2 14.6 21.5 15.8 L22.7 25 Q22.7 26 21.6 26 L20.2 26 Q19.4 26 19.2 25 L18.8 21 L18.8 33.7 L15.2 33.7 L15.2 26 L13.6 26 L13.6 33.7 L10 33.7 L10 21 L9.6 25 Q9.4 26 8.6 26 L7.2 26 Q6.1 26 6.1 25 L7.3 15.8 Q7.6 14.6 8.7 14.5 Z" fill="#fdbd1d" stroke="#6b5a3a" stroke-width="0.6"/><path d="M10.5 14.6 L18.3 14.6 L14.4 20.2 Z" fill="#e2822a"/><path d="M10 21 V16.5 M18.8 21 V16.5" stroke="#c99416" stroke-width="0.5"/></svg>
  <!-- zoom -->
  <div class="a" style="left:431px;top:315px;width:40px;height:81px;background:#fff;border-radius:2px;box-shadow:0 1px 4px -1px rgba(0,0,0,.3)"></div>
  <div class="a" style="left:436px;top:355px;width:30px;height:1px;background:#e6e6e6"></div>
  <svg style="left:442px;top:326px" width="18" height="18"><path d="M9 0 V18 M0 9 H18" stroke="#666" stroke-width="3.7"/></svg>
  <svg style="left:442px;top:367px" width="18" height="18"><path d="M0 9 H18" stroke="#666" stroke-width="3.7"/></svg>
  <!-- google logo -->
  <div class="t" style="left:10px;top:397px;font-size:17.5px;letter-spacing:0px;-webkit-text-stroke:0.35px currentColor"><span style="color:#4285f4">G</span><span style="color:#ea4335">o</span><span style="color:#fbbc05">o</span><span style="color:#4285f4">g</span><span style="color:#34a853">l</span><span style="color:#ea4335">e</span></div>
  <!-- attribution -->
  <div class="a" style="left:110px;top:406px;width:371px;height:14px;background:rgba(245,245,245,.7)"></div>
  <svg style="left:115px;top:408px" width="14" height="9"><rect x="0" y="0" width="14" height="9" rx="1" fill="#333"/><g fill="#f5f5f5"><rect x="1.5" y="1.5" width="1.5" height="1.5"/><rect x="4" y="1.5" width="1.5" height="1.5"/><rect x="6.5" y="1.5" width="1.5" height="1.5"/><rect x="9" y="1.5" width="1.5" height="1.5"/><rect x="11" y="1.5" width="1.5" height="1.5"/><rect x="1.5" y="4" width="1.5" height="1.5"/><rect x="4" y="4" width="1.5" height="1.5"/><rect x="6.5" y="4" width="1.5" height="1.5"/><rect x="9" y="4" width="1.5" height="1.5"/><rect x="11" y="4" width="1.5" height="1.5"/><rect x="3" y="6.5" width="8" height="1.3"/></g></svg>
  <div class="t" style="left:141px;top:408px;font-size:10px;color:#333">Kartdata ©2024 Google</div>
  <div class="t" style="left:259px;top:408px;font-size:10px;color:#333">20 m</div>
  <svg style="left:285px;top:409px" width="43" height="7"><path d="M1 0 V5.5 H42 V0" fill="none" stroke="#555" stroke-width="2"/></svg>
  <div class="t" style="left:340px;top:408px;font-size:10px;color:#444">Villkor</div>
  <div class="t" style="left:381px;top:408px;font-size:10px;color:#333">Rapportera ett kartfel</div>
</div>


<!-- ============ POPUP ============ -->
<div class="a" style="left:981px;top:265px;width:280px;height:104px;background:#fff;border:1px solid #d4d4d4;border-radius:3px;box-shadow:0 2px 3px rgba(0,0,0,.25)"></div>
<svg style="left:1024px;top:309px" width="14" height="18" viewBox="0 0 14 18"><path d="M4.5 2.5 V1 H9.5 V2.5" fill="none" stroke="#333" stroke-width="1.3"/><rect x="0.5" y="2.5" width="13" height="2" fill="#333"/><path d="M1.8 5.5 H12.2 L11.5 17.3 H2.5 Z" fill="#333"/><path d="M4.5 7 V16 M7 7 V16 M9.5 7 V16" stroke="#fff" stroke-width="1"/></svg>
<div class="t" style="left:1057px;top:310px;font-size:14.6px;color:#555">Ta bort tilläggsobjekt</div>
<div class="a" style="left:1009px;top:340px;width:224px;height:1px;background:#c8c8c8"></div>
<div class="a" style="left:970px;top:254px;width:303px;height:126px;border:3px solid #f00"></div>



</body></html>
